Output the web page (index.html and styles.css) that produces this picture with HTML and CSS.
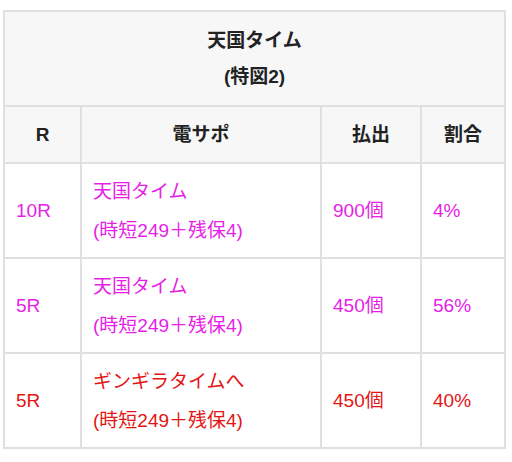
FILE: index.html
```html
<!DOCTYPE html>
<html lang="ja">
<head>
<meta charset="utf-8">
<link rel="stylesheet" href="styles.css">
</head>
<body>
<table class="tbl">
  <colgroup>
    <col class="c1"><col class="c2"><col class="c3"><col class="c4">
  </colgroup>
  <thead>
    <tr><th colspan="4" class="title">天国タイム<br>(特図2)</th></tr>
    <tr><th>R</th><th>電サポ</th><th>払出</th><th>割合</th></tr>
  </thead>
  <tbody>
    <tr class="pink"><td>10R</td><td>天国タイム<br>(時短249＋残保4)</td><td>900個</td><td>4%</td></tr>
    <tr class="pink"><td>5R</td><td>天国タイム<br>(時短249＋残保4)</td><td>450個</td><td>56%</td></tr>
    <tr class="red"><td>5R</td><td>ギンギラタイムへ<br>(時短249＋残保4)</td><td>450個</td><td>40%</td></tr>
  </tbody>
</table>
</body>
</html>
```
FILE: styles.css
```css
html, body {
  margin: 0;
  padding: 0;
  background: #fff;
}
body {
  font-family: "Liberation Sans", "Noto Sans CJK JP", sans-serif;
  font-size: 19px;
  color: #222;
}
.tbl {
  margin: 10px 0 0 3px;
  width: 501px;
  border-collapse: collapse;
  table-layout: fixed;
}
.c1 { width: 77px; }
.c2 { width: 240px; }
.c3 { width: 100px; }
.c4 { width: 84px; }
.tbl th, .tbl td {
  border: 2px solid #e0e0e0;
  padding: 0 11px;
  vertical-align: middle;
}
.tbl th {
  background: #f7f7f7;
  font-weight: bold;
  text-align: center;
  line-height: 36px;
  height: 55px;
  font-size: 19px;
}
.tbl th.title {
  height: 93px;
}
.tbl td {
  text-align: left;
  line-height: 39px;
  height: 93px;
}
.pink td { color: #e61ee6; }
.red td { color: #e41414; }
```
